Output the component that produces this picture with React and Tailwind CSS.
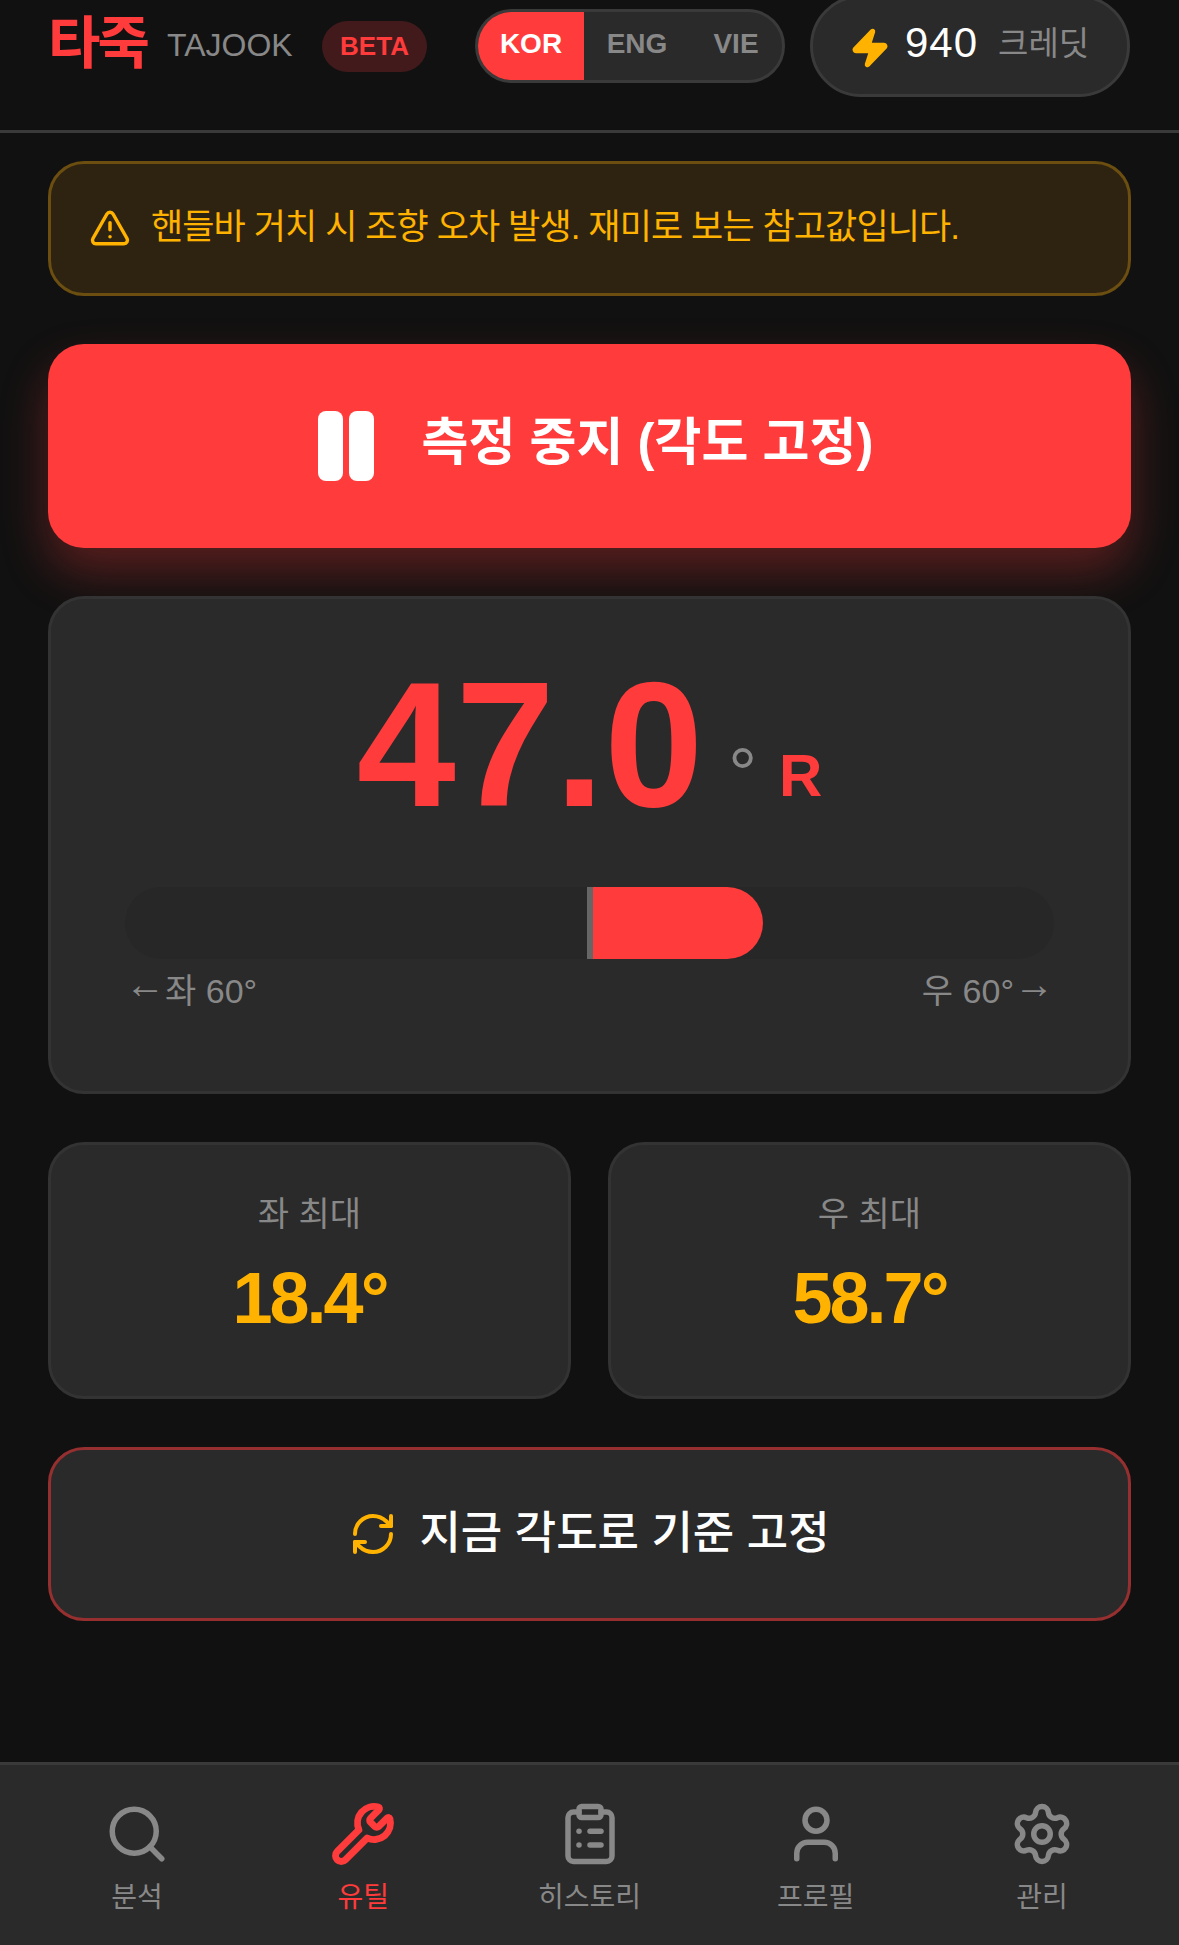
import { Zap, TriangleAlert, RefreshCw, Search, Wrench, ClipboardList, User, Settings } from 'lucide-react'

const FONT = "font-['Liberation_Sans','Noto_Sans_CJK_KR',sans-serif]"

const NAV = [
  { label: '분석', icon: Search },
  { label: '유틸', icon: Wrench, active: true },
  { label: '히스토리', icon: ClipboardList },
  { label: '프로필', icon: User },
  { label: '관리', icon: Settings },
]

function StatCard({ label, value }) {
  return (
    <div className="flex-1 h-[257px] rounded-[36px] bg-[#2a2a2a] border-[3px] border-[#333333] flex flex-col items-center pt-[45px]">
      <p className="text-[34px] leading-[48px] text-[#888888]">{label}</p>
      <p className="mt-[12px] text-[72px] leading-[96px] font-bold text-[#ffb300] tracking-[-3px]">{value}</p>
    </div>
  )
}

export default function App() {
  return (
    <div className={`${FONT} w-[1179px] h-[1945px] overflow-hidden bg-[#111111] flex flex-col whitespace-nowrap`}>
      <header className="h-[133px] shrink-0 border-b-[3px] border-[#3a3a3a] px-[48px]">
        <div className="h-[92px] flex items-center">
          <span className="w-[101px] shrink-0 text-[57px] leading-none font-bold text-[#ff3b3b] tracking-[-3px] mt-[-6px]">타죽</span>
          <span className="ml-[18px] w-[155px] shrink-0 text-[32px] text-[#888888] mt-[-2px]">TAJOOK</span>
          <span className="h-[51px] w-[105px] shrink-0 rounded-full bg-[#421a1b] text-[#ff3b3b] text-[26px] font-bold flex items-center justify-center">BETA</span>
          <div className="ml-[48px] w-[310px] h-[74px] shrink-0 rounded-full bg-[#2a2a2a] border-[3px] border-[#3a3a3a] overflow-hidden flex text-[28px] font-bold text-[#888888]">
            <span className="w-[106px] bg-[#ff3b3b] text-white flex items-center justify-center pb-[4px]">KOR</span>
            <span className="w-[106px] flex items-center justify-center pb-[4px]">ENG</span>
            <span className="w-[92px] flex items-center justify-center pb-[4px]">VIE</span>
          </div>
          <div className="ml-[25px] w-[320px] h-[102px] shrink-0 rounded-full bg-[#2a2a2a] border-[3px] border-[#3a3a3a] flex items-center pl-[36px]">
            <Zap size={42} fill="#ffb300" strokeWidth={2} className="text-[#ffb300] mt-[4px]" />
            <span className="ml-[14px] text-[42px] text-white tracking-[1px] mt-[-8px]">940</span>
            <span className="ml-[20px] text-[33px] text-[#888888] mt-[-4px]">크레딧</span>
          </div>
        </div>
      </header>

      <main className="flex-1 px-[48px] pt-[28px] flex flex-col gap-[48px]">
        <div className="h-[135px] rounded-[36px] bg-[#2d2310] border-[3px] border-[#6b4e10] flex items-center pl-[38px] text-[#ffb300]">
          <TriangleAlert size={42} strokeWidth={2} className="mt-[-2px]" />
          <span className="ml-[20px] text-[35px] tracking-[-0.9px] mt-[-2px]">핸들바 거치 시 조향 오차 발생. 재미로 보는 참고값입니다.</span>
        </div>

        <button className="h-[204px] pl-[12px] rounded-[36px] bg-[#ff3b3b] shadow-[0_24px_48px_rgba(255,59,59,0.3)] flex items-center justify-center text-white">
          <svg width="56" height="70" viewBox="0 0 56 70" fill="white">
            <rect x="0" y="0" width="25" height="70" rx="8" />
            <rect x="31" y="0" width="25" height="70" rx="8" />
          </svg>
          <span className="ml-[48px] text-[51px] font-bold mt-[-6px]">측정 중지 (각도 고정)</span>
        </button>

        <section className="h-[498px] rounded-[36px] bg-[#2a2a2a] border-[3px] border-[#333333] px-[74px] pt-[48px]">
          <div className="h-[228px] flex items-baseline justify-center">
            <span className="text-[178px] leading-[196px] font-bold text-[#ff3b3b]">47.0</span>
            <span className="ml-[25px] text-[72px] text-[#888888] -translate-y-[8px]">°</span>
            <span className="ml-[22px] text-[60px] font-bold text-[#ff3b3b] -translate-y-[10px]">R</span>
          </div>
          <div className="relative mt-[12px] h-[72px] rounded-full bg-[#272727] overflow-hidden">
            <div className="absolute left-[462px] top-0 h-full w-[6px] bg-[#666666]" />
            <div className="absolute left-[468px] top-0 h-full w-[170px] bg-[#ff3b3b] rounded-r-[36px]" />
          </div>
          <div className="mt-[8px] flex justify-between text-[34px] leading-[48px] text-[#888888]">
            <span><span className="inline-block text-[40px] leading-none -translate-y-[5px]">←</span>좌 60°</span>
            <span>우 60°<span className="inline-block text-[40px] leading-none -translate-y-[5px]">→</span></span>
          </div>
        </section>

        <div className="flex gap-[37px]">
          <StatCard label="좌 최대" value="18.4°" />
          <StatCard label="우 최대" value="58.7°" />
        </div>

        <button className="h-[174px] rounded-[36px] bg-[#2a2a2a] border-[3px] border-[#962f2f] flex items-center justify-center text-white">
          <RefreshCw size={48} strokeWidth={2} className="text-[#ffb300]" />
          <span className="ml-[22px] text-[45px] font-medium">지금 각도로 기준 고정</span>
        </button>
      </main>

      <nav className="h-[183px] shrink-0 bg-[#2a2a2a] border-t-[3px] border-[#3a3a3a] px-[24px] flex">
        {NAV.map(n => {
          const Icon = n.icon
          return (
            <div key={n.label} className={`flex-1 flex flex-col items-center pt-[36px] ${n.active ? 'text-[#ff3b3b]' : 'text-[#888888]'}`}>
              <Icon size={66} strokeWidth={n.active ? 2.5 : 2} />
              <span className="mt-[10px] text-[28px] leading-[42px]">{n.label}</span>
            </div>
          )
        })}
      </nav>
    </div>
  )
}
